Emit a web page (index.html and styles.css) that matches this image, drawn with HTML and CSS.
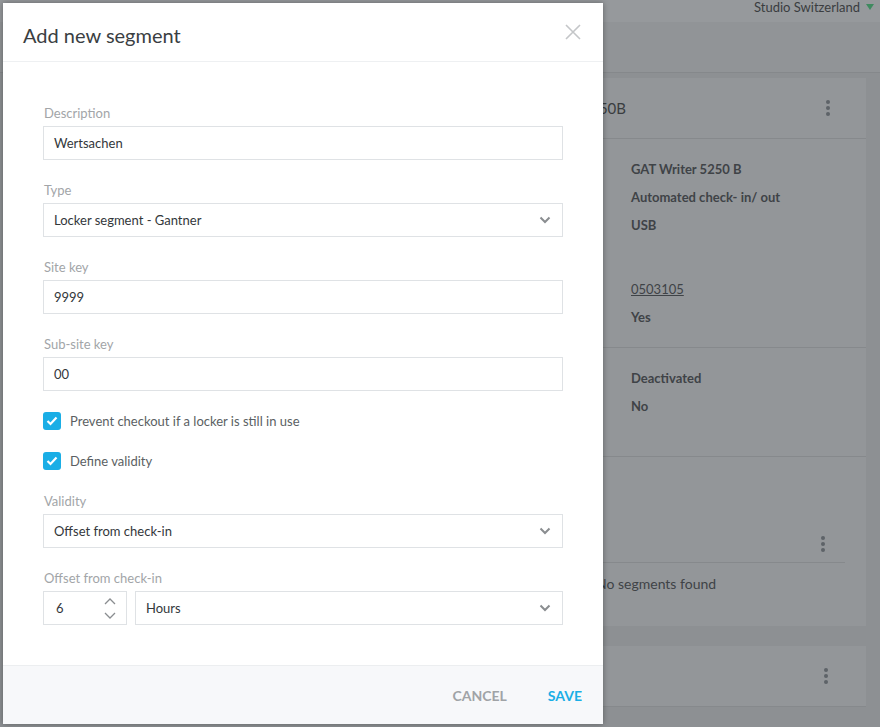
FILE: index.html
```html
<!DOCTYPE html>
<html>
<head>
    <title>Add new segment</title>
    <meta name="viewport" content="width=device-width, initial-scale=1.0">
    <link rel="stylesheet" href="styles.css">
</head>
<body>
    <div class="topbar">
        <span class="studio">Studio Switzerland</span>
        <span class="studio-caret"></span>
    </div>
    <div class="tabband"></div>

    <div class="page">
        <div class="card">
            <div class="card-head">
                <div class="card-title">Locker terminal GAT Writer 5250B</div>
                <div class="kebab"><i></i><i></i><i></i></div>
            </div>
            <div class="card-section s1">
                <div class="val">GAT Writer 5250 B</div>
                <div class="val">Automated check- in/ out</div>
                <div class="val">USB</div>
                <div class="val spaced"><a href="#">0503105</a></div>
                <div class="val">Yes</div>
            </div>
            <div class="card-section s2">
                <div class="val">Deactivated</div>
                <div class="val">No</div>
            </div>
            <div class="card-section s3">
                <div class="sub-head">
                    <div class="kebab"><i></i><i></i><i></i></div>
                </div>
                <div class="empty">No segments found</div>
            </div>
        </div>
        <div class="card card2">
            <div class="card-head">
                <div class="card-title">Terminal</div>
                <div class="kebab"><i></i><i></i><i></i></div>
            </div>
        </div>
    </div>

    <div class="modal">
        <div class="modal-head">
            <h2>Add new segment</h2>
            <svg class="close" width="16" height="16" viewBox="0 0 16 16"><path d="M1 1L15 15M15 1L1 15" stroke="#c4c6c8" stroke-width="1.6" fill="none"/></svg>
        </div>
        <div class="modal-body">
            <div class="field">
                <label>Description</label>
                <div class="input">Wertsachen</div>
            </div>
            <div class="field">
                <label>Type</label>
                <div class="input select">Locker segment - Gantner
                    <svg class="chev" width="12" height="8" viewBox="0 0 12 8"><path d="M1.5 1.5L6 6L10.5 1.5" stroke="#8a8d90" stroke-width="2" fill="none"/></svg>
                </div>
            </div>
            <div class="field">
                <label>Site key</label>
                <div class="input">9999</div>
            </div>
            <div class="field">
                <label>Sub-site key</label>
                <div class="input">00</div>
            </div>
            <div class="check">
                <span class="box"><svg width="12" height="10" viewBox="0 0 12 10"><path d="M1.5 5L4.5 8L10.5 1.5" stroke="#fff" stroke-width="2.2" fill="none"/></svg></span>
                Prevent checkout if a locker is still in use
            </div>
            <div class="check">
                <span class="box"><svg width="12" height="10" viewBox="0 0 12 10"><path d="M1.5 5L4.5 8L10.5 1.5" stroke="#fff" stroke-width="2.2" fill="none"/></svg></span>
                Define validity
            </div>
            <div class="field">
                <label>Validity</label>
                <div class="input select">Offset from check-in
                    <svg class="chev" width="12" height="8" viewBox="0 0 12 8"><path d="M1.5 1.5L6 6L10.5 1.5" stroke="#8a8d90" stroke-width="2" fill="none"/></svg>
                </div>
            </div>
            <div class="field last">
                <label>Offset from check-in</label>
                <div class="row">
                    <div class="input number">6
                        <span class="spin">
                            <svg width="12" height="7" viewBox="0 0 12 7"><path d="M1 6L6 1L11 6" stroke="#8a8d90" stroke-width="1.3" fill="none"/></svg>
                            <svg width="12" height="7" viewBox="0 0 12 7"><path d="M1 1L6 6L11 1" stroke="#8a8d90" stroke-width="1.3" fill="none"/></svg>
                        </span>
                    </div>
                    <div class="input select grow">Hours
                        <svg class="chev" width="12" height="8" viewBox="0 0 12 8"><path d="M1.5 1.5L6 6L10.5 1.5" stroke="#8a8d90" stroke-width="2" fill="none"/></svg>
                    </div>
                </div>
            </div>
        </div>
        <div class="modal-foot">
            <button class="btn cancel">Cancel</button>
            <button class="btn save">Save</button>
        </div>
    </div>
</body>
</html>
```

FILE: styles.css
```css
html, body {margin: 0; padding: 0;}
body {width: 880px; height: 727px; overflow: hidden; background-color: #8d9093; font-family: "Lato", "Noto Sans", sans-serif; color: #3c4044; position: relative;}

.topbar {height: 22px; background-color: #96999c; display: flex; justify-content: flex-end; align-items: flex-start; padding-right: 6px; overflow: hidden;}
.studio {font-size: 13px; line-height: 15px; color: #3a3d40; margin-top: 0;}
.studio-caret {width: 0; height: 0; border-left: 4px solid transparent; border-right: 4px solid transparent; border-top: 6px solid #3f8a5f; margin: 4px 0 0 6px;}
.tabband {height: 50px; background-color: #919497; border-bottom: 1px solid #85888b;}

.page {padding: 5px 14px 0 20px;}
.card {background-color: #939699;}
.card-head {height: 60px; display: flex; align-items: center; border-bottom: 1px solid #86898c; padding-right: 36px;}
.card-title {width: 606px; text-align: right; font-size: 15px; color: #3a3d40;}
.kebab {margin-left: auto; display: flex; flex-direction: column; gap: 2px;}
.kebab i {display: block; width: 4px; height: 4px; border-radius: 50%; background-color: #5e6368;}

.card-section {padding-left: 611px; border-bottom: 1px solid #86898c;}
.val {font-size: 13px; font-weight: 700; line-height: 28px; color: #3f4347;}
.val a {color: #3f4347; font-weight: 400;}
.val.spaced {margin-top: 36px;}
.s1 {padding-top: 16px; padding-bottom: 16px;}
.s2 {padding-top: 16px; padding-bottom: 36px;}
.s3 {padding-left: 0; border-bottom: none; padding-top: 68px; padding-bottom: 34px;}
.sub-head {height: 37px; display: flex; align-items: center; border-bottom: 1px solid #86898c; margin-right: 21px; padding-right: 20px;}
.empty {font-size: 14px; padding: 12px 0 0 576px; color: #3f4347;}
.card2 {margin-top: 20px;}
.card2 .card-title {width: 500px;}
.card2 .card-head {padding-right: 38px;}

.modal {position: absolute; left: 3px; top: 3px; width: 600px; height: 721px; background-color: #fff; display: flex; flex-direction: column; box-shadow: 0 0 6px rgba(0, 0, 0, 0.35);}
.modal-head {height: 59px; box-sizing: border-box; display: flex; align-items: center; padding: 5px 22px 0 20px; border-bottom: 1px solid #eef0f2;}
.modal-head h2 {margin: 0; font-size: 20px; font-weight: 400; color: #3a3e42;}
.close {margin-left: auto; margin-top: -6px;}

.modal-body {flex: 1; padding: 42px 40px 0 40px;}
.field {margin-bottom: 21px;}
.field label {display: block; font-size: 13px; line-height: 18px; color: #a2a5a8; margin-bottom: 4px; padding-left: 1px;}
.input {height: 32px; border: 1px solid #dfe2e5; display: flex; align-items: center; padding: 0 10px; font-size: 13px; color: #33373b; position: relative;}
.select {padding-left: 10px;}
.chev {margin-left: auto; margin-right: 1px;}
.row {display: flex; gap: 8px;}
.number {width: 60px; padding-left: 12px; flex: none;}
.spin {margin-left: auto; display: flex; flex-direction: column; gap: 7px; margin-right: 0;}
.grow {flex: 1;}

.check {display: flex; align-items: center; height: 18px; margin-bottom: 22px; font-size: 13px; color: #5b5f63;}
.check .box {width: 18px; height: 18px; border-radius: 3px; background-color: #1aaee6; display: flex; align-items: center; justify-content: center; margin-right: 9px;}

.modal-foot {height: 58px; background-color: #f7f8fa; border-top: 1px solid #eceef0; display: flex; align-items: center; justify-content: flex-end; padding-right: 21px; gap: 41px;}
.btn {background: none; border: none; padding: 0; font-family: "Lato", "Noto Sans", sans-serif; font-size: 14px; font-weight: 700; text-transform: uppercase; margin-top: 0;}
.cancel {color: #a0a3a6;}
.save {color: #1aaee6;}
```
